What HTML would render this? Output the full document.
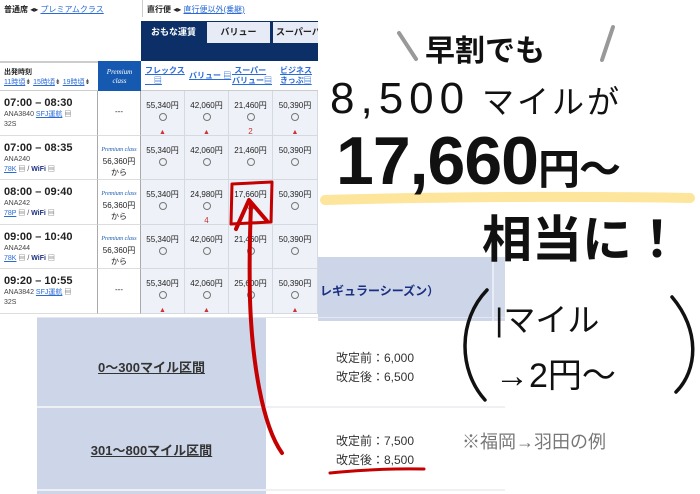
<!DOCTYPE html>
<html><head><meta charset="utf-8"><style>
*{margin:0;padding:0;box-sizing:border-box}
body{width:700px;height:494px;overflow:hidden;background:#fff;position:relative;font-family:"Liberation Sans","Noto Sans CJK JP",sans-serif;color:#222}
.a{position:absolute}
.lnk{color:#2a6bd6;text-decoration:underline}
.cell{position:absolute;background:#eef1f7;border-right:1px solid #d5d9e0;border-bottom:1px solid #d5d9e0;font-size:8px;text-align:center;padding-top:8px;line-height:13px}
.circ{display:inline-block;width:8px;height:8px;border:1px solid #777;border-radius:50%}
.tri{color:#c33;font-size:7px}
.num{color:#c33;font-size:8px}
.time{position:absolute;left:4px;font-size:11px;font-weight:bold;line-height:13px}
.sub{font-size:7px;font-weight:normal;color:#444;line-height:10px}
.hw{position:absolute;font-family:"Liberation Sans","Noto Sans CJK JP",sans-serif;color:#111;white-space:nowrap}
</style></head><body>
<div class="a" style="left:4px;top:4px;font-size:8px"><b>普通席</b> ◂▸ <span class="lnk">プレミアムクラス</span></div>
<div class="a" style="left:142px;top:0;width:1px;height:17px;background:#ccc"></div>
<div class="a" style="left:147px;top:4px;font-size:8px"><b>直行便</b> ◂▸ <span class="lnk">直行便以外(乗継)</span></div>
<div class="a" style="left:141px;top:21px;width:177px;height:40px;background:#0b2f66"></div>
<div class="a" style="left:141px;top:21px;width:65px;height:22px;color:#fff;font-size:9px;font-weight:bold;text-align:center;line-height:22px">おもな運賃</div>
<div class="a" style="left:207px;top:22px;width:63px;height:21px;background:#e6ebf5;font-size:9px;font-weight:bold;text-align:center;line-height:21px">バリュー</div>
<div class="a" style="left:273px;top:22px;width:45px;height:21px;background:#e6ebf5;font-size:9px;font-weight:bold;line-height:21px;padding-left:3px;overflow:hidden;white-space:nowrap">スーパーバリ</div>
<div class="a" style="left:0;top:61px;width:98px;height:30px;border-top:2px solid #ccc;border-bottom:1px solid #ccc;font-size:7px;padding:4px 4px"><b>出発時刻</b><br><span class="lnk">11時頃</span>⇟ <span class="lnk">15時頃</span>⇟ <span class="lnk">19時頃</span>⇟</div>
<div class="a" style="left:98px;top:61px;width:43px;height:30px;background:#1659b0;color:#fff;font-family:'Liberation Serif',serif;font-style:italic;font-size:7px;text-align:center;padding-top:7px;line-height:9px">Premium<br>class</div>
<div class="a" style="left:141px;top:61px;width:177px;height:30px;background:#fff;border-bottom:1px solid #ccc"></div>
<div class="a lnk" style="left:145px;top:66px;font-size:8px;font-weight:bold;line-height:10px">フレックス<br>&nbsp;&nbsp;&nbsp;&nbsp;▤</div>
<div class="a lnk" style="left:189px;top:70px;font-size:8px;font-weight:bold">バリュー ▤</div>
<div class="a lnk" style="left:232px;top:66px;font-size:8px;font-weight:bold;line-height:10px">&nbsp;スーパー<br>バリュー▤</div>
<div class="a lnk" style="left:280px;top:66px;font-size:8px;font-weight:bold;line-height:10px">ビジネス<br>きっぷ▤</div>
<div id="rows"></div>
<script>
var R=[["07:00 – 08:30","ANA3840 <span class='lnk'>SFJ運航</span> ▤<br>32S","---",["55,340円","42,060円","21,460円","50,390円"],["▲","▲","2","▲"]],
["07:00 – 08:35","ANA240<br><span class='lnk'>78K</span> ▤ / <b style='color:#1b2f80'>WiFi</b> ▤","p",["55,340円","42,060円","21,460円","50,390円"],["","","",""]],
["08:00 – 09:40","ANA242<br><span class='lnk'>78P</span> ▤ / <b style='color:#1b2f80'>WiFi</b> ▤","p",["55,340円","24,980円","17,660円","50,390円"],["","4","1",""]],
["09:00 – 10:40","ANA244<br><span class='lnk'>78K</span> ▤ / <b style='color:#1b2f80'>WiFi</b> ▤","p",["55,340円","42,060円","21,460円","50,390円"],["","","",""]],
["09:20 – 10:55","ANA3842 <span class='lnk'>SFJ運航</span> ▤<br>32S","---",["55,340円","42,060円","25,600円","50,390円"],["▲","▲","1","▲"]]];
var ys=[91,136,180,225,269,314],xs=[141,185,229,273,318],h="";
R.forEach(function(r,i){var y=ys[i],hh=ys[i+1]-y;
h+="<div class='a' style='left:0;top:"+y+"px;width:98px;height:"+hh+"px;border-bottom:1px solid #ddd;border-right:1px solid #aaa'></div>";
h+="<div class='time' style='top:"+(y+6)+"px'>"+r[0]+"<div class='sub'>"+r[1]+"</div></div>";
h+="<div class='a' style='left:98px;top:"+y+"px;width:43px;height:"+hh+"px;border-bottom:1px solid #ddd;border-right:1px solid #aaa;text-align:center;font-size:8px;line-height:11px;padding-top:"+(r[2]=="---"?15:7)+"px'>"+(r[2]=="---"?"---":"<i style='font-family:Liberation Serif,serif;color:#1659b0;font-size:6px'>Premium class</i><br>56,360円<br>から")+"</div>";
for(var j=0;j<4;j++){var m=r[4][j];h+="<div class='cell' style='left:"+xs[j]+"px;top:"+y+"px;width:"+(xs[j+1]-xs[j])+"px;height:"+hh+"px'>"+r[3][j]+"<br><span class='circ'></span><br>"+(m=="▲"?"<span class='tri'>▲</span>":"<span class='num'>"+m+"</span>")+"</div>";}
});
document.getElementById("rows").innerHTML=h;
</script>
<div class="a" style="left:318px;top:257px;width:174px;height:64px;background:#cdd5e8"></div>
<div class="a" style="left:492px;top:257px;width:13px;height:64px;background:#d3daea;border-left:2px solid #e8ecf4"></div>
<div class="a" style="left:320px;top:282px;font-size:12px;font-weight:bold;color:#1b2f80">レギュラーシーズン）</div>
<div class="a" style="left:37px;top:318px;width:229px;height:176px;background:#cdd5e8"></div>
<div class="a" style="left:37px;top:317px;width:468px;height:1px;background:#e4e7ee"></div>
<div class="a" style="left:37px;top:406px;width:468px;height:2px;background:#eef0f4"></div>
<div class="a" style="left:37px;top:489px;width:468px;height:2px;background:#eef0f4"></div>
<div class="a" style="left:37px;top:357px;width:229px;text-align:center;font-size:13px;font-weight:bold;color:#333;text-decoration:underline">0〜300マイル区間</div>
<div class="a" style="left:37px;top:440px;width:229px;text-align:center;font-size:13px;font-weight:bold;color:#333;text-decoration:underline">301〜800マイル区間</div>
<div class="a" style="left:336px;top:349px;font-size:12px;line-height:19px;color:#333">改定前：6,000<br>改定後：6,500</div>
<div class="a" style="left:336px;top:432px;font-size:12px;line-height:19px;color:#333">改定前：7,500<br>改定後：8,500</div>
<svg class="a" style="left:0;top:0" width="700" height="494">
<path d="M232 184 L272 182 L271 222 L231 224 Z" fill="none" stroke="#c40000" stroke-width="3" stroke-linejoin="round"/>
<path d="M282 453 C262 425 252 360 250 300 C249 260 250 230 251 205" fill="none" stroke="#c40000" stroke-width="4" stroke-linecap="round"/>
<path d="M236 229 L249 200 L267 221" fill="none" stroke="#c40000" stroke-width="4" stroke-linecap="round" stroke-linejoin="round"/>
<path d="M330 473 Q380 468 424 469" fill="none" stroke="#c40000" stroke-width="3" stroke-linecap="round"/>
<path d="M325 200 Q500 195 690 198" fill="none" stroke="#fde59b" stroke-width="10" stroke-linecap="round"/>
<path d="M487 290 C458 320 458 370 485 400" fill="none" stroke="#111" stroke-width="3.5" stroke-linecap="round"/>
<path d="M672 297 C700 330 698 370 676 392" fill="none" stroke="#111" stroke-width="3.5" stroke-linecap="round"/>
<path d="M399 33 L416 59 M613 27 L602 60" stroke="#999" stroke-width="4" stroke-linecap="round"/>
</svg>
<div class="hw" style="left:425px;top:26px;font-size:30px;font-weight:bold">早割でも</div>
<div class="hw" style="left:330px;top:74px;font-size:44px;letter-spacing:6px">8,500<span style="font-size:32px;letter-spacing:3px"> マイルが</span></div>
<div class="hw" style="left:336px;top:128px;font-size:68px;font-weight:bold;line-height:66px;letter-spacing:-1px">17,660<span style="font-size:42px">円～</span></div>
<div class="hw" style="left:482px;top:200px;font-size:50px;font-weight:bold">相当に！</div>
<div class="hw" style="left:495px;top:295px;font-size:32px">|マイル</div>
<div class="hw" style="left:495px;top:348px;font-size:34px">→2円～</div>
<div class="hw" style="left:462px;top:428px;font-size:18px;color:#777">※福岡→羽田の例</div>
</body></html>
